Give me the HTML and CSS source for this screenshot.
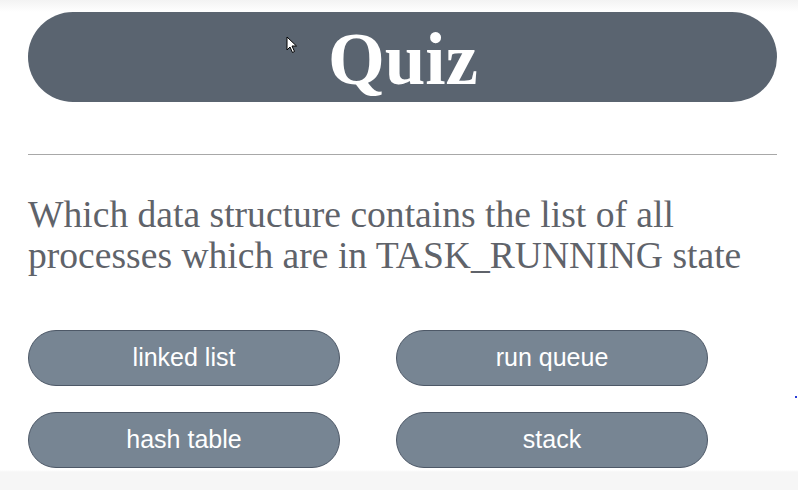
FILE: index.html
```html
<!DOCTYPE html>
<html>
<head>
<meta charset="utf-8">
<link rel="stylesheet" href="styles.css">
</head>
<body>
<div class="page">
  <header class="title-bar"><h1 class="title">Quiz</h1></header>
  <hr class="divider">
  <p class="question">Which data structure contains the list of all processes which are in TASK_RUNNING state</p>
  <div class="options">
    <button class="option">linked list</button>
    <button class="option">run queue</button>
    <button class="option">hash table</button>
    <button class="option">stack</button>
  </div>
  <svg class="cursor" width="12" height="18" viewBox="0 0 12 18"><path d="M1 1 L1 14 L4 11 L6.5 16.5 L8.5 15.5 L6 10 L10.5 10 Z" fill="#ffffff" stroke="#000000" stroke-width="1" stroke-linejoin="round"/></svg>
  <span class="dot"></span>
</div>
</body>
</html>
```
FILE: styles.css
```css
html, body {
  margin: 0;
  padding: 0;
  background: #ffffff;
}
.page {
  position: relative;
  width: 798px;
  height: 490px;
  box-sizing: border-box;
  padding: 12px 21px 0 28px;
  background: linear-gradient(#f3f3f3 0px, #ffffff 12px, #ffffff 470px, #f6f6f6 472px);
}
.title-bar {
  height: 90px;
  border-radius: 45px;
  background: #5a6470;
  display: flex;
  align-items: center;
  justify-content: center;
}
.title {
  margin: 0;
  font-family: "Liberation Serif", serif;
  font-weight: bold;
  font-size: 73px;
  color: #ffffff;
  line-height: 1;
  padding: 5px 0 0 1px;
}
.divider {
  margin: 52px 0 0 0;
  border: 0;
  border-top: 1px solid #a8a8a8;
}
.question {
  margin: 39px 0 0 0;
  font-family: "Liberation Serif", serif;
  font-size: 37.6px;
  line-height: 41px;
  color: #5f636a;
}
.options {
  margin-top: 54px;
  display: grid;
  grid-template-columns: 312px 312px;
  column-gap: 56px;
  row-gap: 26px;
}
.option {
  height: 56px;
  border-radius: 28px;
  border: 1px solid #4d5867;
  background: #778593;
  color: #ffffff;
  font-family: "Liberation Sans", Arial, sans-serif;
  font-size: 25px;
  padding: 0 0 1px 0;
}
.cursor {
  position: absolute;
  left: 286px;
  top: 36px;
}
.dot {
  position: absolute;
  left: 795px;
  top: 396px;
  width: 2px;
  height: 2px;
  background: #2a3cd8;
}
```
